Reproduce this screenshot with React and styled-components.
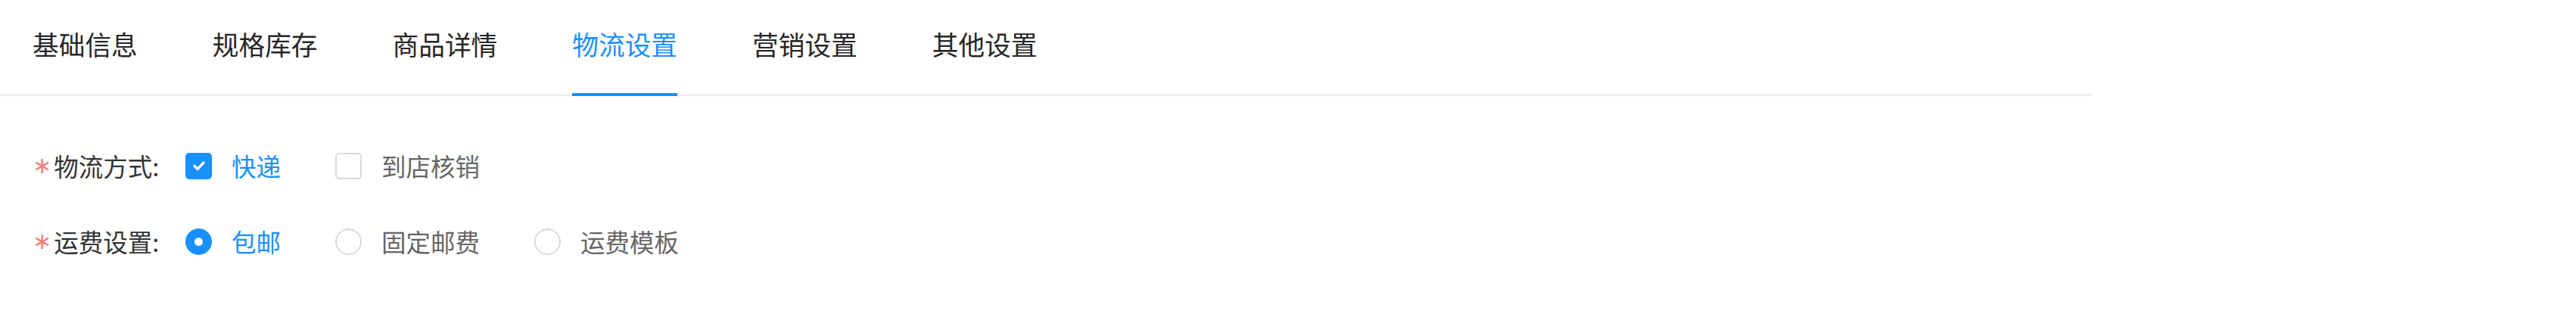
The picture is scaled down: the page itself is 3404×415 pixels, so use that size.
import React from "react";
import styled, { createGlobalStyle } from "styled-components";

const GlobalStyle = createGlobalStyle`
  html, body { margin: 0; padding: 0; background: #ffffff; }
  body { font-family: "Noto Sans CJK SC", "Noto Sans", sans-serif; }
`;

const BLUE = "#1890ff";

const Page = styled.div`
  width: 3404px;
  height: 415px;
  background: #fff;
  font-family: "Noto Sans CJK SC", "Noto Sans", sans-serif;
`;

const TabNav = styled.div`
  display: flex;
  box-sizing: border-box;
  width: 2764px;
  height: 127px;
  padding-left: 43px;
  border-bottom: 3px solid #eeeeee;
`;

const Tab = styled.div`
  position: relative;
  box-sizing: border-box;
  height: 127px;
  margin-right: 99px;
  margin-bottom: -3px;
  padding-bottom: 10px;
  display: flex;
  align-items: center;
  font-size: 34.7px;
  line-height: 1;
  color: ${(p) => (p.$active ? BLUE : "#262626")};
  white-space: nowrap;
  cursor: pointer;

  &::after {
    content: "";
    position: absolute;
    left: 0;
    right: 0;
    bottom: 0;
    height: 4px;
    background: ${(p) => (p.$active ? BLUE : "transparent")};
  }
`;

const Form = styled.div`
  display: flex;
  flex-direction: column;
  gap: 32px;
  padding: 58px 0 0 43px;
`;

const Row = styled.div`
  display: flex;
  align-items: center;
  height: 68px;
`;

const Label = styled.div`
  width: 202px;
  display: flex;
  align-items: center;
  font-size: 32.5px;
  line-height: 1;
  color: #333333;
  white-space: nowrap;
`;

const Required = styled.span`
  color: #f47f80;
  margin-right: 3px;
  font-family: "DejaVu Sans", sans-serif;
  font-size: 30px;
  line-height: 1;
`;

const Group = styled.div`
  display: flex;
  align-items: center;
`;

const Option = styled.label`
  display: flex;
  align-items: center;
  margin-right: 72px;
  font-size: 32.5px;
  line-height: 1;
  color: ${(p) => (p.$checked ? BLUE : "#666666")};
  white-space: nowrap;
  cursor: pointer;
`;

const Box = styled.span`
  box-sizing: border-box;
  width: 35px;
  height: 35px;
  margin-right: 26px;
  border-radius: 5px;
  border: 2px solid ${(p) => (p.$checked ? BLUE : "#d7dae2")};
  background: ${(p) => (p.$checked ? BLUE : "#fff")};
  display: flex;
  align-items: center;
  justify-content: center;
  flex-shrink: 0;
`;

const Radio = styled.span`
  box-sizing: border-box;
  width: 35px;
  height: 35px;
  margin-right: 26px;
  border-radius: 50%;
  border: 2px solid ${(p) => (p.$checked ? BLUE : "#d7dae2")};
  background: ${(p) => (p.$checked ? BLUE : "#fff")};
  display: flex;
  align-items: center;
  justify-content: center;
  flex-shrink: 0;

  &::after {
    content: "";
    width: 11px;
    height: 11px;
    border-radius: 50%;
    background: #fff;
    display: ${(p) => (p.$checked ? "block" : "none")};
  }
`;

const Check = () => (
  <svg width="20" height="16" viewBox="0 0 20 16">
    <path d="M4 8.4 L8.2 12.4 L16 4" fill="none" stroke="#fff" strokeWidth="3.4" strokeLinecap="round" strokeLinejoin="round" />
  </svg>
);

const tabs = ["基础信息", "规格库存", "商品详情", "物流设置", "营销设置", "其他设置"];

export default function App() {
  return (
    <Page>
      <GlobalStyle />
      <TabNav>
        {tabs.map((t) => (
          <Tab key={t} $active={t === "物流设置"}>
            {t}
          </Tab>
        ))}
      </TabNav>
      <Form>
        <Row>
          <Label>
            <Required>∗</Required>物流方式:
          </Label>
          <Group>
            <Option $checked>
              <Box $checked>
                <Check />
              </Box>
              快递
            </Option>
            <Option>
              <Box />
              到店核销
            </Option>
          </Group>
        </Row>
        <Row>
          <Label>
            <Required>∗</Required>运费设置:
          </Label>
          <Group>
            <Option $checked>
              <Radio $checked />
              包邮
            </Option>
            <Option>
              <Radio />
              固定邮费
            </Option>
            <Option>
              <Radio />
              运费模板
            </Option>
          </Group>
        </Row>
      </Form>
    </Page>
  );
}
